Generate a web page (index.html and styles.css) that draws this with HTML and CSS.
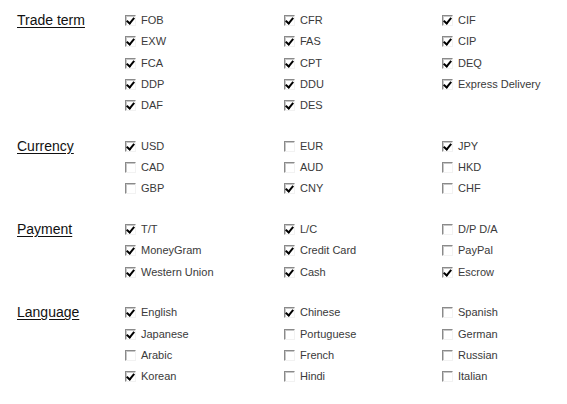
FILE: index.html
```html
<!DOCTYPE html>
<html>
<head>
<meta charset="utf-8">
<link rel="stylesheet" href="styles.css">
</head>
<body>
<div class="page">
  <section class="group">
    <h2 class="title">Trade term</h2>
    <div class="opts">
      <label class="opt on"><i class="cb"></i>FOB</label>
      <label class="opt on"><i class="cb"></i>CFR</label>
      <label class="opt on"><i class="cb"></i>CIF</label>
      <label class="opt on"><i class="cb"></i>EXW</label>
      <label class="opt on"><i class="cb"></i>FAS</label>
      <label class="opt on"><i class="cb"></i>CIP</label>
      <label class="opt on"><i class="cb"></i>FCA</label>
      <label class="opt on"><i class="cb"></i>CPT</label>
      <label class="opt on"><i class="cb"></i>DEQ</label>
      <label class="opt on"><i class="cb"></i>DDP</label>
      <label class="opt on"><i class="cb"></i>DDU</label>
      <label class="opt on"><i class="cb"></i>Express Delivery</label>
      <label class="opt on"><i class="cb"></i>DAF</label>
      <label class="opt on"><i class="cb"></i>DES</label>
    </div>
  </section>
  <section class="group">
    <h2 class="title">Currency</h2>
    <div class="opts">
      <label class="opt on"><i class="cb"></i>USD</label>
      <label class="opt"><i class="cb"></i>EUR</label>
      <label class="opt on"><i class="cb"></i>JPY</label>
      <label class="opt"><i class="cb"></i>CAD</label>
      <label class="opt"><i class="cb"></i>AUD</label>
      <label class="opt"><i class="cb"></i>HKD</label>
      <label class="opt"><i class="cb"></i>GBP</label>
      <label class="opt on"><i class="cb"></i>CNY</label>
      <label class="opt"><i class="cb"></i>CHF</label>
    </div>
  </section>
  <section class="group">
    <h2 class="title">Payment</h2>
    <div class="opts">
      <label class="opt on"><i class="cb"></i>T/T</label>
      <label class="opt on"><i class="cb"></i>L/C</label>
      <label class="opt"><i class="cb"></i>D/P D/A</label>
      <label class="opt on"><i class="cb"></i>MoneyGram</label>
      <label class="opt on"><i class="cb"></i>Credit Card</label>
      <label class="opt"><i class="cb"></i>PayPal</label>
      <label class="opt on"><i class="cb"></i>Western Union</label>
      <label class="opt on"><i class="cb"></i>Cash</label>
      <label class="opt on"><i class="cb"></i>Escrow</label>
    </div>
  </section>
  <section class="group">
    <h2 class="title">Language</h2>
    <div class="opts">
      <label class="opt on"><i class="cb"></i>English</label>
      <label class="opt on"><i class="cb"></i>Chinese</label>
      <label class="opt"><i class="cb"></i>Spanish</label>
      <label class="opt on"><i class="cb"></i>Japanese</label>
      <label class="opt"><i class="cb"></i>Portuguese</label>
      <label class="opt"><i class="cb"></i>German</label>
      <label class="opt"><i class="cb"></i>Arabic</label>
      <label class="opt"><i class="cb"></i>French</label>
      <label class="opt"><i class="cb"></i>Russian</label>
      <label class="opt on"><i class="cb"></i>Korean</label>
      <label class="opt"><i class="cb"></i>Hindi</label>
      <label class="opt"><i class="cb"></i>Italian</label>
    </div>
  </section>
</div>
</body>
</html>
```

FILE: styles.css
```css
html, body {
  margin: 0;
  padding: 0;
  background: #ffffff;
}
.page {
  width: 567px;
  height: 404px;
  padding-top: 10px;
  box-sizing: border-box;
  font-family: Arial, "Liberation Sans", sans-serif;
  display: flex;
  flex-direction: column;
  gap: 19.5px;
}
.group {
  display: flex;
  align-items: flex-start;
}
.title {
  margin: 0;
  width: 108px;
  padding-left: 17px;
  font-size: 14px;
  font-weight: normal;
  line-height: 21px;
  color: #111111;
  text-decoration: underline;
  text-underline-offset: 2px;
}
.opts {
  display: grid;
  grid-template-columns: 159px 158px 120px;
  grid-auto-rows: 21.25px;
}
.opt {
  display: flex;
  align-items: center;
  gap: 5px;
  font-size: 11px;
  color: #3a3a3a;
  line-height: 21px;
  white-space: nowrap;
}
.cb {
  display: block;
  width: 9px;
  height: 9px;
  border-left: 1px solid #8a8a8a;
  border-top: 1px solid #8a8a8a;
  border-right: 1px solid #f2f2f2;
  border-bottom: 1px solid #f2f2f2;
  box-shadow: inset 1px 1px 0 #c8c8c8;
  position: relative;
  flex: none;
}
.opt.on .cb::after {
  content: "";
  position: absolute;
  left: 2px;
  top: 0px;
  width: 3px;
  height: 6px;
  border-right: 2px solid #000;
  border-bottom: 2px solid #000;
  transform: rotate(40deg);
}
```
